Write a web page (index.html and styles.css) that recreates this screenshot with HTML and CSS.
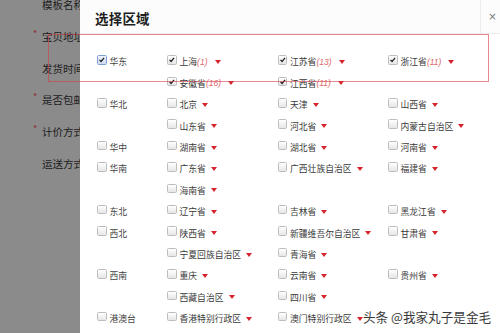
FILE: index.html
```html
<!DOCTYPE html>
<html lang="zh">
<head>
<meta charset="utf-8">
<title>选择区域</title>
<link rel="stylesheet" href="styles.css">
</head>
<body>
<div class="page">
  <aside class="side">
    <div class="field"><span class="star"></span>模板名称</div>
    <div class="field"><span class="star">*</span>宝贝地址</div>
    <div class="field"><span class="star"></span>发货时间</div>
    <div class="field"><span class="star">*</span>是否包邮</div>
    <div class="field"><span class="star">*</span>计价方式</div>
    <div class="field"><span class="star"></span>运送方式</div>
  </aside>
  <section class="modal">
    <header class="modal-head">
      <h1 class="title">选择区域</h1>
      <span class="close">×</span>
    </header>
    <div class="modal-body">
      <div class="region">
        <div class="rlabel"><span class="cb on blue"><svg viewBox="0 0 9 9"><path d="M1.8 4.6 L3.7 6.6 L7.3 2.2"/></svg></span>华东</div>
        <div class="provs">
          <span class="prov"><span class="cb on"><svg viewBox="0 0 9 9"><path d="M1.8 4.6 L3.7 6.6 L7.3 2.2"/></svg></span>上海<i class="cnt">(1)</i><b class="tri"></b></span>
          <span class="prov"><span class="cb on"><svg viewBox="0 0 9 9"><path d="M1.8 4.6 L3.7 6.6 L7.3 2.2"/></svg></span>江苏省<i class="cnt">(13)</i><b class="tri"></b></span>
          <span class="prov"><span class="cb on"><svg viewBox="0 0 9 9"><path d="M1.8 4.6 L3.7 6.6 L7.3 2.2"/></svg></span>浙江省<i class="cnt">(11)</i><b class="tri"></b></span>
          <span class="prov"><span class="cb on"><svg viewBox="0 0 9 9"><path d="M1.8 4.6 L3.7 6.6 L7.3 2.2"/></svg></span>安徽省<i class="cnt">(16)</i><b class="tri"></b></span>
          <span class="prov"><span class="cb on"><svg viewBox="0 0 9 9"><path d="M1.8 4.6 L3.7 6.6 L7.3 2.2"/></svg></span>江西省<i class="cnt">(11)</i><b class="tri"></b></span>
        </div>
      </div>
      <div class="region">
        <div class="rlabel"><span class="cb"></span>华北</div>
        <div class="provs">
          <span class="prov"><span class="cb"></span>北京<b class="tri"></b></span>
          <span class="prov"><span class="cb"></span>天津<b class="tri"></b></span>
          <span class="prov"><span class="cb"></span>山西省<b class="tri"></b></span>
          <span class="prov"><span class="cb"></span>山东省<b class="tri"></b></span>
          <span class="prov"><span class="cb"></span>河北省<b class="tri"></b></span>
          <span class="prov"><span class="cb"></span>内蒙古自治区<b class="tri"></b></span>
        </div>
      </div>
      <div class="region">
        <div class="rlabel"><span class="cb"></span>华中</div>
        <div class="provs">
          <span class="prov"><span class="cb"></span>湖南省<b class="tri"></b></span>
          <span class="prov"><span class="cb"></span>湖北省<b class="tri"></b></span>
          <span class="prov"><span class="cb"></span>河南省<b class="tri"></b></span>
        </div>
      </div>
      <div class="region">
        <div class="rlabel"><span class="cb"></span>华南</div>
        <div class="provs">
          <span class="prov"><span class="cb"></span>广东省<b class="tri"></b></span>
          <span class="prov"><span class="cb"></span>广西壮族自治区<b class="tri"></b></span>
          <span class="prov"><span class="cb"></span>福建省<b class="tri"></b></span>
          <span class="prov"><span class="cb"></span>海南省<b class="tri"></b></span>
        </div>
      </div>
      <div class="region">
        <div class="rlabel"><span class="cb"></span>东北</div>
        <div class="provs">
          <span class="prov"><span class="cb"></span>辽宁省<b class="tri"></b></span>
          <span class="prov"><span class="cb"></span>吉林省<b class="tri"></b></span>
          <span class="prov"><span class="cb"></span>黑龙江省<b class="tri"></b></span>
        </div>
      </div>
      <div class="region">
        <div class="rlabel"><span class="cb"></span>西北</div>
        <div class="provs">
          <span class="prov"><span class="cb"></span>陕西省<b class="tri"></b></span>
          <span class="prov"><span class="cb"></span>新疆维吾尔自治区<b class="tri"></b></span>
          <span class="prov"><span class="cb"></span>甘肃省<b class="tri"></b></span>
          <span class="prov"><span class="cb"></span>宁夏回族自治区<b class="tri"></b></span>
          <span class="prov"><span class="cb"></span>青海省<b class="tri"></b></span>
        </div>
      </div>
      <div class="region">
        <div class="rlabel"><span class="cb"></span>西南</div>
        <div class="provs">
          <span class="prov"><span class="cb"></span>重庆<b class="tri"></b></span>
          <span class="prov"><span class="cb"></span>云南省<b class="tri"></b></span>
          <span class="prov"><span class="cb"></span>贵州省<b class="tri"></b></span>
          <span class="prov"><span class="cb"></span>西藏自治区<b class="tri"></b></span>
          <span class="prov"><span class="cb"></span>四川省<b class="tri"></b></span>
        </div>
      </div>
      <div class="region">
        <div class="rlabel"><span class="cb"></span>港澳台</div>
        <div class="provs">
          <span class="prov"><span class="cb"></span>香港特别行政区<b class="tri"></b></span>
          <span class="prov"><span class="cb"></span>澳门特别行政区<b class="tri"></b></span>
        </div>
      </div>
    </div>
  </section>
  <div class="annot"></div>
  <div class="watermark">头条 @我家丸子是金毛</div>
</div>
</body>
</html>
```

FILE: styles.css
```css
* { box-sizing: border-box; }
html, body {
  margin: 0;
  padding: 0;
  width: 500px;
  height: 333px;
  overflow: hidden;
  background: #fff;
  font-family: "Noto Sans CJK SC", "Noto Sans", sans-serif;
}
.page {
  position: relative;
  display: flex;
  width: 500px;
  height: 333px;
  overflow: hidden;
}
.side {
  width: 80px;
  flex: none;
  background: #8b8b8b;
  overflow: hidden;
  padding-left: 33px;
  display: flex;
  flex-direction: column;
}
.field {
  height: 31.8px;
  line-height: 31.8px;
  font-size: 10.5px;
  color: #1c1c1c;
  white-space: nowrap;
  display: flex;
  align-items: center;
}
.field:first-child { margin-top: -11px; }
.star {
  width: 9px;
  flex: none;
  color: #8a2f33;
  font-size: 9px;
  align-self: flex-start;
  line-height: 26px;
}
.modal {
  flex: 1;
  background: #fff;
  display: flex;
  flex-direction: column;
  min-width: 0;
}
.modal-head {
  height: 34px;
  flex: none;
  display: flex;
  align-items: stretch;
  border-bottom: 1px solid #ececec;
  background: #fcfcfc;
}
.title {
  flex: 1;
  margin: 0;
  padding-left: 15px;
  font-size: 13.4px;
  font-weight: 700;
  color: #1e1e1e;
  line-height: 36px;
  letter-spacing: 0.3px;
}
.close {
  width: 20px;
  border-left: 1px solid #ececec;
  color: #777;
  font-size: 10px;
  font-family: "DejaVu Sans", sans-serif;
  display: flex;
  align-items: center;
  justify-content: center;
  padding-left: 4px;
}
.modal-body {
  padding: 17.3px 0 0 17px;
  overflow: hidden;
}
.region {
  display: flex;
  align-items: flex-start;
}
.rlabel, .prov {
  height: 21.4px;
  display: flex;
  align-items: center;
  font-size: 8.8px;
  color: #3a3a3a;
  white-space: nowrap;
}
.rlabel {
  width: 70px;
  flex: none;
  color: #444;
}
.provs {
  width: 332px;
  display: flex;
  flex-wrap: wrap;
}
.prov { width: 110.5px; }
.cb {
  width: 9.5px;
  height: 9.5px;
  flex: none;
  margin: 0 3px 4px 0;
  border: 1px solid #bdbdbd;
  border-radius: 1.5px;
  background: linear-gradient(#ffffff, #e6e6e6);
  display: flex;
}
.cb svg {
  width: 100%;
  height: 100%;
}
.cb svg path {
  fill: none;
  stroke: #222;
  stroke-width: 1.5;
}
.cb.blue {
  border-color: #7f9fd4;
  background: linear-gradient(#eef3fb, #cfdcf0);
}
.cnt {
  color: #e06a6a;
  font-family: "Liberation Sans", Arial, sans-serif;
  font-size: 8.5px;
  margin-right: 2px;
}
.tri {
  width: 0;
  height: 0;
  margin-left: 5px;
  border-left: 3.8px solid transparent;
  border-right: 3.8px solid transparent;
  border-top: 4.5px solid #d7242c;
}
.annot {
  position: absolute;
  left: 48px;
  top: 34px;
  width: 441px;
  height: 48px;
  border: 1.6px solid rgba(214, 60, 70, 0.6);
  pointer-events: none;
}
.watermark {
  position: absolute;
  left: 363px;
  top: 307px;
  font-size: 12.6px;
  color: #3b3b3b;
  white-space: nowrap;
  text-shadow: 0 0 2px #fff, 0 0 1px #fff;
}
```
